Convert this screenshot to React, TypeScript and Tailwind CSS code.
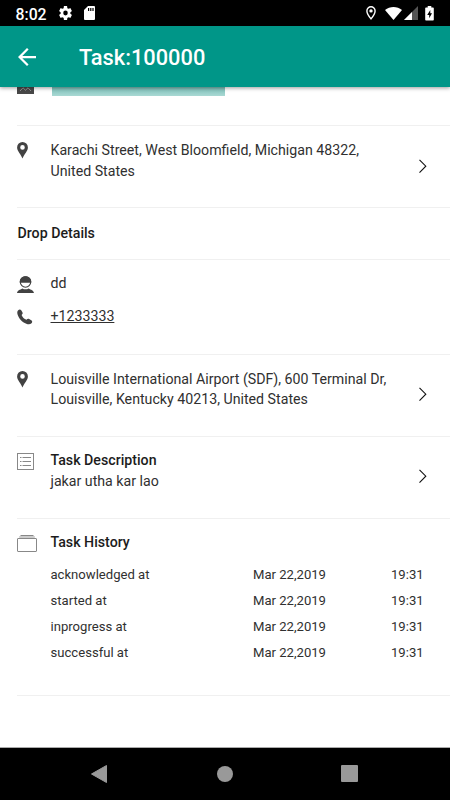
import type { ReactNode } from 'react';

interface SectionProps {
  children: ReactNode;
  className?: string;
}

interface AddressProps {
  lines: string[];
}

const history = [
  { label: 'acknowledged at', date: 'Mar 22,2019', time: '19:31' },
  { label: 'started at', date: 'Mar 22,2019', time: '19:31' },
  { label: 'inprogress at', date: 'Mar 22,2019', time: '19:31' },
  { label: 'successful at', date: 'Mar 22,2019', time: '19:31' },
];

function Section({ children, className = '' }: SectionProps) {
  return (
    <section className={`ml-[17px] flex shrink-0 border-b border-[#f0f0f0] ${className}`}>
      {children}
    </section>
  );
}

function PinIcon() {
  return (
    <svg width="11" height="17" viewBox="0 0 11 17" className="mt-[3px]">
      <path
        fill="#424242"
        fillRule="evenodd"
        d="M5.5 0A5.4 5.4 0 0 0 .1 5.4C.1 9.2 4.2 12.4 5.5 16.6 6.8 12.4 10.9 9.2 10.9 5.4A5.4 5.4 0 0 0 5.5 0Zm0 3.1a2.3 2.3 0 1 1 0 4.6 2.3 2.3 0 0 1 0-4.6Z"
      />
    </svg>
  );
}

function Chevron() {
  return (
    <svg width="10" height="15" viewBox="0 0 10 15" fill="none" className="mt-[19.5px] mr-[22.5px] ml-auto shrink-0">
      <path d="M1.5 .8l6.3 6.4-6.3 6.4" stroke="#111" strokeWidth="1.1" />
    </svg>
  );
}

function StatusBar() {
  return (
    <div className="flex h-[26px] shrink-0 items-center bg-black pr-[16px] pl-[15.5px] text-white">
      <span className="mt-[3px] w-[43.5px] text-[15.8px] leading-[26px] font-medium">8:02</span>
      <svg width="13" height="14" viewBox="2 2 20 20" fill="#fff" preserveAspectRatio="none">
        <path d="M19.43 12.98c.04-.32.07-.64.07-.98s-.03-.66-.07-.98l2.11-1.65c.19-.15.24-.42.12-.64l-2-3.46c-.12-.22-.39-.3-.61-.22l-2.49 1c-.52-.4-1.08-.73-1.69-.98l-.38-2.65C14.46 2.18 14.25 2 14 2h-4c-.25 0-.46.18-.49.42l-.38 2.65c-.61.25-1.17.59-1.69.98l-2.49-1c-.23-.09-.49 0-.61.22l-2 3.46c-.13.22-.07.49.12.64l2.11 1.65c-.04.32-.07.65-.07.98s.03.66.07.98l-2.11 1.65c-.19.15-.24.42-.12.64l2 3.46c.12.22.39.3.61.22l2.49-1c.52.4 1.08.73 1.69.98l.38 2.65c.03.24.24.42.49.42h4c.25 0 .46-.18.49-.42l.38-2.65c.61-.25 1.17-.59 1.69-.98l2.49 1c.23.09.49 0 .61-.22l2-3.46c.12-.22.07-.49-.12-.64l-2.11-1.65zM12 15.5a3.5 3.5 0 1 1 0-7 3.5 3.5 0 0 1 0 7z" />
      </svg>
      <svg width="11" height="14" viewBox="0 0 11 14" className="ml-[12px]">
        <path
          fill="#fff"
          fillRule="evenodd"
          d="M4 0h6a1 1 0 0 1 1 1v12a1 1 0 0 1-1 1H1a1 1 0 0 1-1-1V4ZM4 2v3h1.2V2Zm2.2 0v3h1.2V2Zm2.2 0v3h1.2V2Z"
        />
      </svg>
      <div className="ml-auto flex items-center">
        <svg width="10" height="14" viewBox="0 0 10 14" fill="none">
          <path d="M5 .8A4.1 4.1 0 0 0 .9 4.9C.9 7.8 5 12.9 5 12.9s4.1-5.1 4.1-8A4.1 4.1 0 0 0 5 .8Z" stroke="#fff" strokeWidth="1.4" />
          <circle cx="5" cy="4.9" r="1.7" fill="#fff" />
        </svg>
        <svg width="17" height="13" viewBox="0 0 17 13" className="ml-[9px]">
          <path fill="#fff" d="M0 3C4.8-.9 12.2-.9 17 3L8.5 13Z" />
        </svg>
        <svg width="14" height="14" viewBox="0 0 14 14" className="ml-[2px]">
          <path fill="#555" d="M14 0v14H0Z" />
          <path fill="#fff" d="M8 6v8H0Z" />
        </svg>
        <svg width="9" height="15" viewBox="0 0 9 15" className="ml-[7px]">
          <path fill="#fff" fillRule="evenodd" d="M2.7 0h3.6v1.500H8a.8.8 0 0 1 .8.8v11.400a.8.8 0 0 1-.8.8H1a.8.8 0 0 1-.8-.8V2.300A.8.8 0 0 1 1 1.500h1.700ZM5.300 4 2.200 9h2v3.200L7 7.200H5.300Z" />
        </svg>
      </div>
    </div>
  );
}

function AppBar() {
  return (
    <header className="z-10 flex h-[61px] shrink-0 items-center bg-[#009688] pl-[17.5px] text-white shadow-[0_1px_4px_rgba(0,0,0,0.4)]">
      <svg width="18" height="18" viewBox="4 4 16 16" fill="#fff">
        <path d="M20 11H7.83l5.59-5.59L12 4l-8 8 8 8 1.41-1.41L7.83 13H20v-2z" />
      </svg>
      <h1 className="mt-[2px] ml-[43.5px] text-[21.8px] leading-[26px] font-medium">Task:100000</h1>
    </header>
  );
}

function AddressSection({ lines }: AddressProps) {
  return (
    <Section className="h-[82px] pt-[13px]">
      <div className="w-[33.5px] shrink-0">
        <PinIcon />
      </div>
      <div className="pt-[0.6px] leading-[20.7px]">
        {lines.map((line) => (
          <p key={line} className="whitespace-nowrap">{line}</p>
        ))}
      </div>
      <Chevron />
    </Section>
  );
}

export default function App() {
  return (
    <div className="flex h-[800px] w-[450px] flex-col overflow-hidden bg-white font-['Roboto',sans-serif] text-[14.2px] leading-[21px] text-[#303030]">
      <StatusBar />
      <AppBar />

      <main className="flex flex-1 flex-col overflow-hidden">
        {/* Bottom edge of the pickup contact, scrolled under the app bar */}
        <Section className="h-[39.4px]">
          <svg width="17" height="7" viewBox="0 0 17 7" className="mr-[18px]">
            <path fill="#484848" d="M0 0h17v7H0Z" />
            <path d="M3 4 6 .8 8.5 3.2 11 .8 14 4" fill="none" stroke="#aaa" strokeWidth=".8" />
          </svg>
          <div className="h-[9px] w-[173px] bg-linear-to-b from-[#79bdb6] to-[#a9d9d4]" />
        </Section>

        <AddressSection lines={['Karachi Street, West Bloomfield, Michigan 48322,', 'United States']} />

        <Section className="h-[51.6px] items-center">
          <h2 className="ml-[0.5px] font-medium text-[#1c1c1c]">Drop Details</h2>
        </Section>

        <Section className="h-[95px] flex-col pt-[13px]">
          <div className="flex h-[33px]">
            <div className="w-[33.5px]">
              <svg width="17" height="17" viewBox="0 0 17 17" className="mt-[3px]">
                <path fill="#424242" d="M0 17c.3-2.6 3-3.3 5.4-4.6 1.900 1.200 4.300 1.200 6.200 0C14 13.700 16.700 14.400 17 17Z" />
                <circle cx="8.5" cy="6" r="5.2" fill="#fff" stroke="#424242" strokeWidth="1.1" />
                <path fill="#424242" d="M2.8 6.7C2.3 2.8 4.9.3 8.5.3s6.200 2.500 5.700 6.400Z" />
              </svg>
            </div>
            <p>dd</p>
          </div>
          <div className="flex">
            <div className="w-[33.5px]">
              <svg width="16" height="16" viewBox="0 0 16 16" className="mt-[3px]">
                <path
                  fill="#424242"
                  d="M1.2 1.3C2.3.2 3.6.4 4.4 1.6l1 1.7c.6 1 .2 1.8-.8 2.8.8 2.2 2.6 3.9 4.9 4.7.8-1 1.7-1.3 2.7-.7l2 1.2c1.2.7 1.3 1.9.3 3-1.2 1.3-3.2 1.3-5.2.5C5.1 13.1 1.7 9.5.5 5.2.1 3.6.2 2.3 1.2 1.3Z"
                />
              </svg>
            </div>
            <a href="tel:+1233333" className="underline">+1233333</a>
          </div>
        </Section>

        <AddressSection
          lines={['Louisville International Airport (SDF), 600 Terminal Dr,', 'Louisville, Kentucky 40213, United States']}
        />

        <Section className="h-[82px] pt-[13px]">
          <div className="w-[33.5px] shrink-0">
            <svg width="17" height="17" viewBox="0 0 17 17" fill="none" stroke="#888" className="mt-[3px]">
              <rect x=".5" y=".5" width="16" height="16" />
              <path d="M3 4.5h1.5m1 0H14M3 8.5h1.5m1 0H14M3 12.5h1.5m1 0H14" />
            </svg>
          </div>
          <div>
            <h2 className="font-medium text-[#1c1c1c]">Task Description</h2>
            <p>jakar utha kar lao</p>
          </div>
          <Chevron />
        </Section>

        <Section className="h-[177px] pt-[13px]">
          <div className="w-[33.5px] shrink-0">
            <svg width="20" height="17" viewBox="0 0 20 17" fill="none" stroke="#888" className="mt-[3px]">
              <path d="M2.5 1.5h15v1h-15Z" fill="#ccc" stroke="#ccc" />
              <path d="M3.5.5h13" />
              <rect x=".5" y="3.5" width="19" height="13" rx=".5" />
            </svg>
          </div>
          <div className="flex-1">
            <h2 className="font-medium text-[#1c1c1c]">Task History</h2>
            <div className="mt-[8px] text-[13.1px]">
              {history.map((item) => (
                <div key={item.label} className="flex h-[26.2px] items-center">
                  <span className="w-[202.5px]">{item.label}</span>
                  <span className="w-[138px]">{item.date}</span>
                  <span>{item.time}</span>
                </div>
              ))}
            </div>
          </div>
        </Section>
      </main>

      <nav className="flex h-[53px] shrink-0 items-center border-t border-[#aaaaaa] bg-black pb-px pl-[91px]">
        <svg width="16" height="18" viewBox="0 0 16 18">
          <path d="M15.5.5v17L.5 9Z" fill="#999" stroke="#999" strokeLinejoin="round" />
        </svg>
        <div className="ml-[110px] h-[16px] w-[16px] rounded-full bg-[#999]" />
        <div className="ml-[108px] h-[17px] w-[17px] rounded-[1px] bg-[#999]" />
      </nav>
    </div>
  );
}
